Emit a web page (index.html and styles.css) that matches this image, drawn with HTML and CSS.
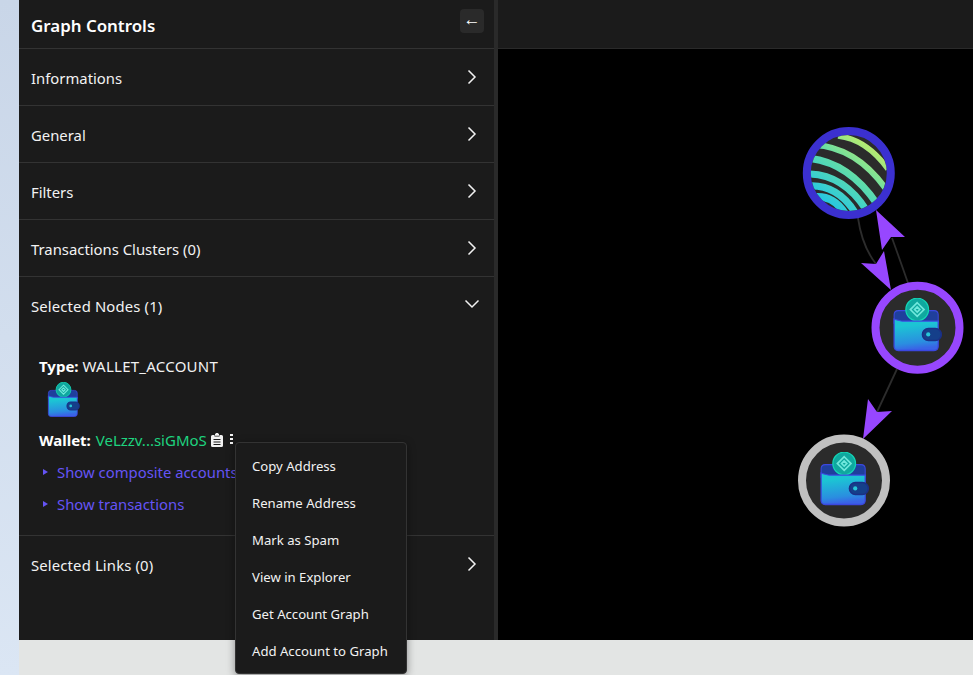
FILE: index.html
```html
<!DOCTYPE html>
<html lang="en">
<head>
<meta charset="utf-8">
<title>Graph Controls</title>
<link rel="stylesheet" href="styles.css">
</head>
<body>
<svg class="defs" width="0" height="0" aria-hidden="true">
  <defs>
    <linearGradient id="wb" x1="0" y1="0" x2="0.15" y2="1">
      <stop offset="0.25" stop-color="#1cc4d4"/><stop offset="0.8" stop-color="#2a8ee0"/><stop offset="1" stop-color="#3a63e6"/>
    </linearGradient>
    <linearGradient id="stripes" gradientUnits="userSpaceOnUse" x1="325" y1="160" x2="380" y2="90">
      <stop offset="0" stop-color="#1cc4ec"/><stop offset="0.5" stop-color="#5edcab"/><stop offset="1" stop-color="#d2ef5e"/>
    </linearGradient>
    <clipPath id="c1"><circle cx="350.800" cy="124" r="38"/></clipPath>
    <symbol id="wallet" viewBox="0 0 48 52">
      <path d="M2 16 Q2 12 6 12 L40 12 Q44 12 44 16 L44 24 L2 24 Z" fill="#1f3f9c" stroke="#3b48e0" stroke-width="1"/>
      <circle cx="24" cy="11" r="10.800" fill="#0fa89f" stroke="#12d5b5" stroke-width="1.200"/>
      <path d="M24 4.500 L30.500 11 L24 17.500 L17.500 11 Z M24 8.500 L21.500 11 L24 13.500 L26.500 11 Z" fill="none" stroke="#6fe8dc" stroke-width="1.600"/>
      <path d="M2 20 Q8 22 10 22 L44 22 L44 46 Q44 50 40 50 L6 50 Q2 50 2 46 Z" fill="url(#wb)" stroke="#3b48e0" stroke-width="1.200"/>
      <rect x="29" y="29" width="18" height="11.500" rx="5.700" fill="#153f8a" stroke="#1b2f86" stroke-width="1.500"/>
      <circle cx="34.500" cy="34.700" r="2" fill="#27c7d8"/>
    </symbol>
  </defs>
</svg>
<div class="page">
  <div class="strip"></div>
  <div class="main">
    <div class="workspace">
      <aside class="panel">
        <header class="panel-head">
          <h1 class="panel-title">Graph Controls</h1>
          <button class="collapse-btn">←</button>
        </header>
        <section class="row"><span>Informations</span><svg class="chev" viewBox="0 0 16 16"><path d="M4.500 1.500 L11 8 L4.500 14.500"/></svg></section>
        <section class="row"><span>General</span><svg class="chev" viewBox="0 0 16 16"><path d="M4.500 1.500 L11 8 L4.500 14.500"/></svg></section>
        <section class="row"><span>Filters</span><svg class="chev" viewBox="0 0 16 16"><path d="M4.500 1.500 L11 8 L4.500 14.500"/></svg></section>
        <section class="row"><span>Transactions Clusters (0)</span><svg class="chev" viewBox="0 0 16 16"><path d="M4.500 1.500 L11 8 L4.500 14.500"/></svg></section>
        <section class="row row-open"><span class="wide">Selected Nodes (1)</span><svg class="chev" viewBox="0 0 16 16"><path d="M1.500 4.500 L8 11 L14.500 4.500"/></svg></section>
        <section class="details">
          <div class="line"><b>Type:</b> <span class="type-value">WALLET_ACCOUNT</span></div>
          <svg class="wallet-icon"><use href="#wallet"/></svg>
          <div class="line wallet-line">
            <b>Wallet:</b>&nbsp;<span class="addr">VeLzzv...siGMoS</span>
            <svg class="clip" viewBox="0 0 12 14"><path d="M1.500 2 H3.500 V3.500 H8.500 V2 H10.500 Q12 2 12 3.500 V12.500 Q12 14 10.500 14 H1.500 Q0 14 0 12.500 V3.500 Q0 2 1.500 2 Z M4.500 0.800 Q4.500 0 5.300 0 H6.700 Q7.500 0 7.500 0.800 V1 H8 V2.700 H4 V1 H4.500 Z M2.500 6 V7 H9.500 V6 Z M2.500 8.500 V9.500 H9.500 V8.500 Z M2.500 11 V12 H9.500 V11 Z" fill-rule="evenodd"/></svg>
            <span class="dots"><i></i><i></i><i></i></span>
          </div>
          <div class="disclosures">
            <div class="disclosure"><span class="tri"></span><span>Show composite accounts</span></div>
            <div class="disclosure"><span class="tri"></span><span>Show transactions</span></div>
          </div>
        </section>
        <section class="row row-last"><span class="wide">Selected Links (0)</span><svg class="chev" viewBox="0 0 16 16"><path d="M4.500 1.500 L11 8 L4.500 14.500"/></svg></section>
      </aside>
      <div class="resizer"></div>
      <div class="graph-col">
        <div class="graph-top"></div>
        <div class="canvas">
          <svg class="graph" viewBox="0 0 475 591" width="475" height="591">
            <path class="edge" d="M360 169 Q364 197 378 215"/>
            <path class="edge" d="M394 189 Q402 211 410 234"/>
            <path class="edge" d="M399 320 L379 363"/>
            <polygon class="arrow" points="378,161 407,188 393,188 384,201"/>
            <polygon class="arrow" points="393,241 363,214 378,215 386,202"/>
            <polygon class="arrow" points="365,390 370,350 379,363 394,362"/>
            <circle class="node n1" cx="350.800" cy="124" r="42"/>
            <g class="bands" clip-path="url(#c1)">
              <path stroke-width="5.500" d="M340 87 Q368 90 390 120"/>
              <path stroke-width="6" d="M316 96 Q358 98 388 140"/>
              <path stroke-width="7" d="M308 109 Q350 112 379 155"/>
              <path stroke-width="7" d="M308 125 Q345 124 369 162"/>
              <path stroke-width="7" d="M310 137 Q340 135 358 165"/>
              <path stroke-width="7.500" d="M316 148 Q336 146 348 166"/>
            </g>
            <circle class="node-ring n2" cx="419.500" cy="278.700" r="42"/>
            <svg x="394" y="249" width="50.400" height="54.600"><use href="#wallet"/></svg>
            <circle class="node-ring n3" cx="346" cy="431.500" r="42"/>
            <svg x="321" y="403" width="50.400" height="54.600"><use href="#wallet"/></svg>
          </svg>
        </div>
      </div>
    </div>
    <div class="footer"></div>
  </div>
</div>
<ul class="menu">
  <li>Copy Address</li>
  <li>Rename Address</li>
  <li>Mark as Spam</li>
  <li>View in Explorer</li>
  <li>Get Account Graph</li>
  <li>Add Account to Graph</li>
</ul>
</body>
</html>
```
FILE: styles.css
```css
* { box-sizing: border-box; }
html, body { margin: 0; height: 100%; overflow: hidden; }
body { font-family: "Noto Sans", "Open Sans", sans-serif; font-size: 14.850px; color: #f2f2f2; background: #e3e5e4; }
.defs { position: absolute; }
.page { display: flex; height: 675px; }
.strip { width: 19px; flex: none; background: linear-gradient(180deg, #c9d6e8, #dbe6f4); }
.main { flex: 1; display: flex; flex-direction: column; min-width: 0; }
.workspace { display: flex; height: 640px; }
.panel { width: 475px; flex: none; background: #1b1b1b; }
.resizer { width: 4px; flex: none; background: #2a2a2a; }
.graph-col { flex: 1; display: flex; flex-direction: column; min-width: 0; }
.graph-top { height: 49px; flex: none; background: #1b1b1b; border-bottom: 1px solid #2a2a2a; }
.canvas { flex: 1; background: #000; overflow: hidden; }
.graph { display: block; }
.footer { flex: 1; background: #e3e5e4; }
.panel-head { height: 49px; display: flex; align-items: center; justify-content: space-between; padding: 0 10px 0 12px; border-bottom: 1px solid #333; }
.panel-title { margin: 0; padding-top: 2px; font-size: 16.900px; font-weight: 600; color: #fff; }
.collapse-btn { width: 24px; height: 24px; padding: 0 0 3px; align-self: flex-start; margin-top: 9px; border: 0; border-radius: 4px; background: #2a2a2a; color: #fff; font: 17px "Liberation Sans", sans-serif; line-height: 21px; }
.row { height: 57px; display: flex; align-items: center; justify-content: space-between; padding: 2px 14px 0 12px; border-bottom: 1px solid #333; }
.wide { letter-spacing: .15px; }
.row-open { border-bottom: 0; padding-bottom: 2px; }
.row-last { border-bottom: 0; height: 56px; }
.chev { width: 16px; height: 16px; fill: none; stroke: #f2f2f2; stroke-width: 1.500; margin-top: -3px; }
.details { height: 202px; padding: 21px 20px 0; border-bottom: 1px solid #333; }
.line { height: 22px; line-height: 22px; white-space: nowrap; font-size: 15px; }
.line b { font-weight: 700; color: #fff; }
.type-value { letter-spacing: .25px; }
.wallet-icon { display: block; width: 33px; height: 36px; margin: 5px 0 0 8px; }
.wallet-line { display: flex; align-items: center; height: 24px; margin-top: 10px; }
.addr { color: #1ed37f; margin-left: 1px; }
.clip { width: 12px; height: 14px; fill: #f2f2f2; margin-left: 4px; }
.dots { display: flex; flex-direction: column; gap: 2px; margin-left: 7px; margin-top: -2px; }
.dots i { display: block; width: 3px; height: 2px; background: #f2f2f2; }
.disclosures { margin-top: 4px; }
.disclosure { display: flex; align-items: center; height: 32px; color: #6554f5; gap: 9px; padding-left: 4px; white-space: nowrap; }
.tri { width: 0; height: 0; border-left: 5px solid #6554f5; border-top: 3px solid transparent; border-bottom: 3px solid transparent; }
.edge { fill: none; stroke: #2c2c2c; stroke-width: 1.800; }
.arrow { fill: #9747ff; }
.node, .node-ring { fill: #2b2b2b; stroke-width: 8; }
.bands { fill: none; stroke: url(#stripes); }
.n1 { stroke: #3b30d0; }
.n2 { stroke: #9747ff; }
.n3 { stroke: #c0c0c0; }
.menu { position: absolute; left: 235px; top: 442px; width: 172px; height: 232px; margin: 0; padding: 6px 0; list-style: none; background: #1b1b1b; border: 1px solid #333; border-radius: 4px; box-shadow: 0 2px 8px rgba(0,0,0,.4); font-size: 13.150px; }
.menu li { height: 37px; line-height: 35px; padding-left: 16px; white-space: nowrap; }
```
